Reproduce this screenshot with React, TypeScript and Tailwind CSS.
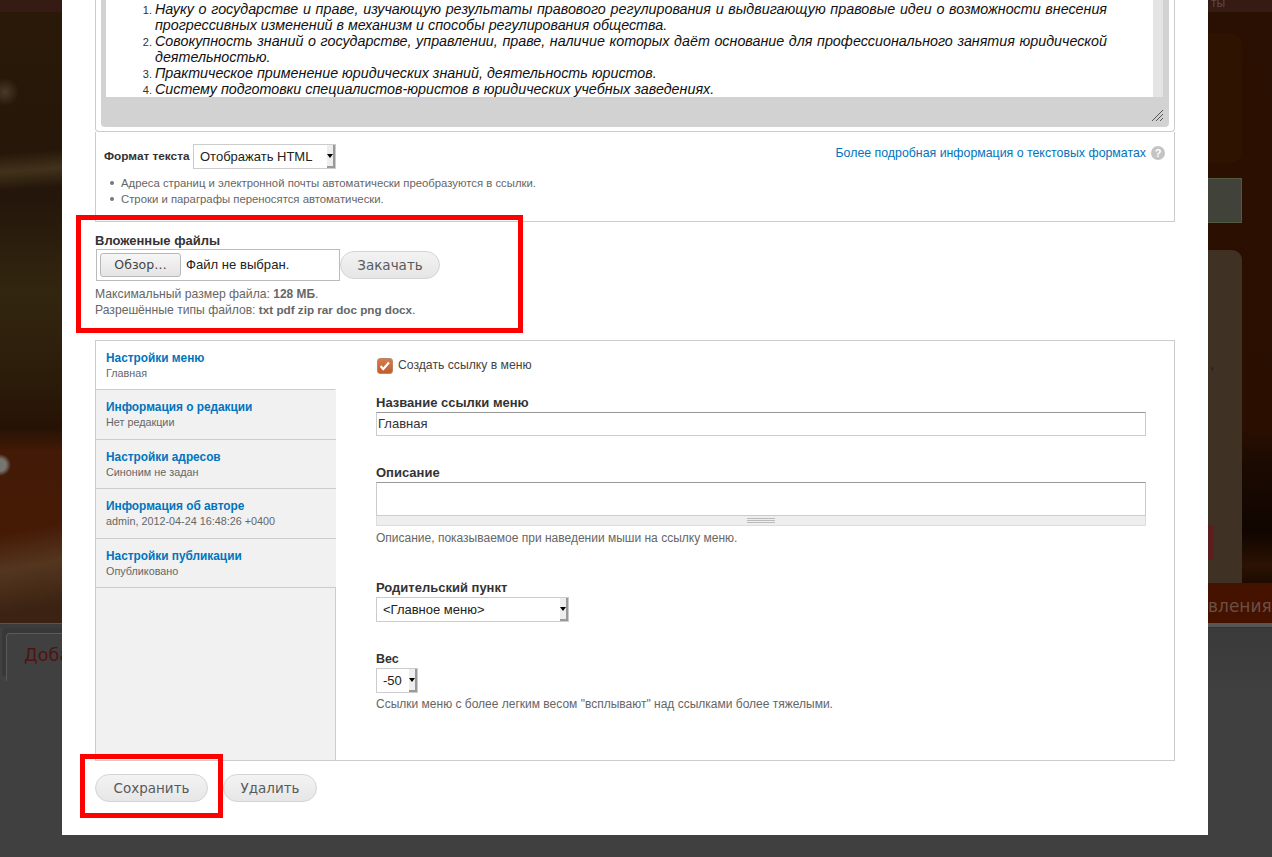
const SANS = "font-['Liberation_Sans',Arial,sans-serif]";

const TABS = [
  { title: 'Настройки меню', sub: 'Главная', height: 'h-[49px]', active: true },
  { title: 'Информация о редакции', sub: 'Нет редакции', height: 'h-[50px]' },
  { title: 'Настройки адресов', sub: 'Синоним не задан', height: 'h-[49px]' },
  { title: 'Информация об авторе', sub: 'admin, 2012-04-24 16:48:26 +0400', height: 'h-[50px]' },
  { title: 'Настройки публикации', sub: 'Опубликовано', height: 'h-[49px]' },
];

function FakeSelect({ label, className }: { label: string; className: string }) {
  return (
    <div className={`flex border border-[#ccc] bg-white text-[13px] text-[#222] ${className}`}>
      <span className="flex-1 self-center whitespace-nowrap pl-[6px] leading-none">{label}</span>
      <span className="flex w-[8px] items-center justify-center border-r-2 border-b-2 border-[#999] bg-[#eee]">
        <span className="h-0 w-0 border-x-[3px] border-t-[4px] border-x-transparent border-t-black" />
      </span>
    </div>
  );
}

function PillButton({ label, className }: { label: string; className: string }) {
  return (
    <button className={`h-[28px] rounded-[14px] border border-[#d4d4d4] bg-[linear-gradient(#f3f3f3,#e6e6e6)] font-['DejaVu_Sans',sans-serif] text-[13.5px] text-[#5a5a5a] ${className}`}>
      {label}
    </button>
  );
}

function LeftBackdrop() {
  return (
    <div className="flex w-[62px] shrink-0 flex-col">
      <div className="h-[12px] bg-[#361a14]" />
      <div className="h-[611px] bg-[radial-gradient(circle_at_0px_453px,#77756f_0,#77756f_6px,transparent_11px),radial-gradient(circle_at_5px_80px,#4a3a28_0,transparent_14px),linear-gradient(170deg,transparent_0,transparent_84%,#54361f_90%,#3b2212_97%),linear-gradient(176deg,transparent_0,transparent_23%,#42321c_26%,transparent_29%),linear-gradient(#2a1908_0,#24160a_30%,#33260f_46%,#2b1c0a_60%,#261205_68%,#431a06_72%,#471b05_100%)]" />
      <div className="h-[5px] border-t border-[#555] bg-[#3c3c3c]" />
      <div className="flex-1 bg-[#404040] pl-[2px]">
        <div className="h-[48px] rounded-tl-[4px] rounded-bl-[3px] bg-[#383838] pt-[5px] pl-[4px]">
          <div className="h-[48px] overflow-hidden rounded-tl-[4px] border-t border-l border-[#5a5a5a] bg-[#404040] pt-[9px] pl-[17px] font-['DejaVu_Sans',sans-serif] text-[17.5px] leading-[24px] whitespace-nowrap text-[#4f1414]">
            Доба
          </div>
        </div>
      </div>
    </div>
  );
}

function RightBackdrop() {
  return (
    <div className="flex w-[64px] shrink-0 flex-col bg-[linear-gradient(#2a1002_0,#2a0f01_50%,#1c0a02_54%,#100500_62%,#2c1203_66%,#0c0400_70%)]">
      <div className="h-[12px] overflow-hidden bg-[#361a14] pl-[3px] text-[12px] leading-[7px] text-[#5b4a42]">ты</div>
      <div className="mt-[21px] h-[130px] w-[34px] rounded-r-[12px] bg-[#2f1301]" />
      <div className="mt-[15px] h-[45px] w-[34px] border-y border-r border-[#4f5a40] bg-[#41433a]" />
      <div className="mt-[27px] flex h-[333px] w-[34px] flex-col rounded-tr-[10px] bg-[#3f3225] pt-[108px] pl-[3px]">
        <span className="h-[14px] text-[13px] leading-[14px] text-[#16161f] italic">,</span>
        <div className="mt-[153px] -ml-[3px] h-[35px] w-[5px] rounded-r-[3px] bg-[#5c1d1d]" />
      </div>
      <div className="h-[40px] overflow-hidden bg-[#451200] pt-[12px] font-['DejaVu_Sans',sans-serif] text-[17px] leading-[22px] whitespace-nowrap text-[#6b4f44]">
        вления
      </div>
      <div className="h-[5px] border-b border-[#333] bg-[#555]" />
      <div className="flex-1 bg-[linear-gradient(#3a3a3a,#404040_70px)]" />
    </div>
  );
}

function VerticalTabs() {
  return (
    <div className={`mt-[22px] flex h-[421px] w-[1080px] border border-[#ccc] ${SANS}`}>
      <ul className="w-[240px] shrink-0 border-r border-[#ccc] bg-[#f1f1f1]">
        {TABS.map((t) => (
          <li
            key={t.title}
            className={`-mr-px border-b border-[#ccc] pt-[10px] pl-[10px] ${t.height} ${t.active ? 'border-r border-r-white bg-white' : 'bg-[#f1f1f1]'}`}
          >
            <div className="text-[11.85px] leading-[15px] font-bold text-[#0074bd]">{t.title}</div>
            <div className="text-[10.8px] leading-[15px] text-[#666]">{t.sub}</div>
          </li>
        ))}
      </ul>
      <div className="flex-1 pt-[16px] pl-[40px]">
        <div className="flex h-[17px] items-center">
          <span className="relative ml-px h-[16px] w-[16px] rounded-[3px] border border-[#b8876c] bg-[linear-gradient(#d97a4a,#c25c2c)]">
            <svg viewBox="0 0 16 16" className="absolute inset-0 h-full w-full">
              <path d="M3 8l3 3.5L12.5 4" fill="none" stroke="#fff" strokeWidth="2.4" />
            </svg>
          </span>
          <span className="ml-[5px] text-[12.2px] text-[#444]">Создать ссылку в меню</span>
        </div>
        <div className="mt-[21px] text-[13px] leading-[16px] font-bold text-[#333]">Название ссылки меню</div>
        <div className="mt-px flex h-[24px] w-[770px] items-center border border-[#ccc] border-t-[#999] pl-px text-[13px] text-[#333]">Главная</div>
        <div className="mt-[29px] text-[13px] leading-[16px] font-bold text-[#333]">Описание</div>
        <div className="mt-px h-[34px] w-[770px] border border-[#ccc] border-t-[#999]" />
        <div className="flex h-[10px] w-[770px] items-center justify-center border border-t-0 border-[#ddd] bg-[#eee]">
          <span className="h-[5px] w-[28px] border-y border-[#bbb] bg-[linear-gradient(#bbb,#bbb)] bg-[length:100%_1px] bg-center bg-no-repeat" />
        </div>
        <div className="mt-[5px] text-[12px] leading-[15px] text-[#666]">Описание, показываемое при наведении мыши на ссылку меню.</div>
        <div className="mt-[34px] text-[13px] leading-[16px] font-bold text-[#333]">Родительский пункт</div>
        <FakeSelect label="<Главное меню>" className="mt-px h-[25px] w-[193px]" />
        <div className="mt-[29px] text-[12.5px] leading-[16px] font-bold text-[#333]">Вес</div>
        <FakeSelect label="-50" className="mt-px h-[25px] w-[42px]" />
        <div className="mt-[4px] text-[12px] leading-[15px] text-[#666]">Ссылки меню с более легким весом "всплывают" над ссылками более тяжелыми.</div>
      </div>
    </div>
  );
}

export default function App() {
  return (
    <div className={`relative flex h-[857px] w-[1272px] overflow-hidden bg-[#404040] ${SANS}`}>
      <LeftBackdrop />
      <div className="h-[835px] w-[1146px] shrink-0 bg-white pl-[33px]">
        {/* Editor */}
        <div className="h-[132px] w-[1080px] rounded-b-[4px] border-x border-b border-[#ccc] px-[5px] pb-[4px]">
          <div className="h-full rounded-b-[4px] bg-[#d2d2d2] pr-[6px] pl-[5px]">
            <div className="flex h-[97px] overflow-hidden">
              <ol className="h-full flex-1 list-decimal bg-white pt-px pr-[46px] pl-[49px] text-[14.3px] leading-[16px] text-[#111] italic">
                <li className="text-justify marker:text-[11px] marker:text-[#333] marker:not-italic">Науку о государстве и праве, изучающую результаты правового регулирования и выдвигающую правовые идеи о возможности внесения прогрессивных изменений в механизм и способы регулирования общества.</li>
                <li className="text-justify marker:text-[11px] marker:text-[#333] marker:not-italic">Совокупность знаний о государстве, управлении, праве, наличие которых даёт основание для профессионального занятия юридической деятельностью.</li>
                <li className="marker:text-[11px] marker:text-[#333] marker:not-italic">Практическое применение юридических знаний, деятельность юристов.</li>
                <li className="marker:text-[11px] marker:text-[#333] marker:not-italic">Систему подготовки специалистов-юристов в юридических учебных заведениях.</li>
              </ol>
              <div className="w-[10px] bg-[#e4e4e4]" />
            </div>
            <div className="flex h-[25px] justify-end pt-[12px]">
              <svg viewBox="0 0 12 12" className="h-[12px] w-[12px]">
                <path d="M1 12L12 1M5 12l7-7M9 12l3-3" stroke="#555" strokeWidth="1" />
              </svg>
            </div>
          </div>
        </div>

        {/* Text format */}
        <div className="h-[90px] w-[1080px] border-x border-b border-[#ccc] px-[8px] pt-[12px]">
          <div className="flex items-start">
            <span className="mt-[5px] w-[89px] shrink-0 text-[11.8px] leading-[15px] font-bold whitespace-nowrap text-[#333]">Формат текста</span>
            <FakeSelect label="Отображать HTML" className="h-[25px] w-[143px]" />
            <a className="mt-[2px] ml-auto text-[12.35px] leading-[15px] whitespace-nowrap text-[#0074bd]">Более подробная информация о текстовых форматах</a>
            <span className="mt-[2px] mr-px ml-[5px] flex h-[14px] w-[14px] items-center justify-center rounded-full bg-[#c4c4c4] text-[11px] leading-none font-bold text-white">?</span>
          </div>
          <ul className="mt-[6px] ml-[6px] text-[11.33px] leading-[16px] text-[#666]">
            <li className="flex items-center"><span className="mr-[7px] h-[4px] w-[4px] rounded-full bg-[#777]" />Адреса страниц и электронной почты автоматически преобразуются в ссылки.</li>
            <li className="flex items-center"><span className="mr-[7px] h-[4px] w-[4px] rounded-full bg-[#777]" />Строки и параграфы переносятся автоматически.</li>
          </ul>
        </div>

        {/* Attachments */}
        <div className="mt-[11px] text-[13px] leading-[15px] font-bold text-[#333]">Вложенные файлы</div>
        <div className="mt-px flex items-center">
          <div className="ml-px flex h-[32px] w-[244px] items-center border border-[#bbb] pl-[3px] text-[#222]">
            <button className="h-[24px] w-[81px] rounded-[3px] border border-[#b8b8b8] bg-[linear-gradient(#f6f6f6,#e4e4e4)] font-['DejaVu_Sans',sans-serif] text-[12.5px] text-[#444]">Обзор…</button>
            <span className="ml-[5px] text-[13.1px]">Файл не выбран.</span>
          </div>
          <PillButton label="Закачать" className="w-[100px]" />
        </div>
        <div className="mt-[6px] text-[12.2px] leading-[15px] text-[#666]">
          Максимальный размер файла: <b className="text-[11.9px]">128 МБ</b>.
          <br />
          <span className="text-[12.15px]">Разрешённые типы файлов:</span> <b className="text-[11.7px]">txt pdf zip rar doc png docx</b>.
        </div>

        <VerticalTabs />

        <div className="mt-[13px] flex gap-[15px]">
          <PillButton label="Сохранить" className="w-[113px]" />
          <PillButton label="Удалить" className="w-[94px]" />
        </div>
      </div>
      <RightBackdrop />

      {/* red annotation frames */}
      <div className="absolute top-[215px] left-[76px] h-[118px] w-[447px] border-[5px] border-[#ff0000]" />
      <div className="absolute top-[754px] left-[80px] h-[64px] w-[143px] border-[5px] border-[#ff0000]" />
    </div>
  );
}
